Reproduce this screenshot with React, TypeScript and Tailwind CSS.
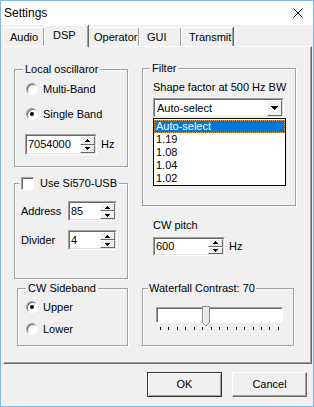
import type { ReactNode } from 'react';

const Radio = ({ checked }: { checked?: boolean }) => (
  <span className="flex h-[12px] w-[12px] shrink-0 items-center justify-center rounded-full border border-t-[#a0a0a0] border-l-[#a0a0a0] border-r-white border-b-white bg-white shadow-[inset_1px_1px_0_#696969]">
    {checked && <span className="h-[4px] w-[4px] rounded-full bg-black" />}
  </span>
);

const Arrow = ({ down }: { down?: boolean }) => (
  <svg width="5" height="3" viewBox="0 0 5 3" shapeRendering="crispEdges">
    {down ? (
      <>
        <rect x="0" y="0" width="5" height="1" />
        <rect x="1" y="1" width="3" height="1" />
        <rect x="2" y="2" width="1" height="1" />
      </>
    ) : (
      <>
        <rect x="2" y="0" width="1" height="1" />
        <rect x="1" y="1" width="3" height="1" />
        <rect x="0" y="2" width="5" height="1" />
      </>
    )}
  </svg>
);

const SpinBtn = ({ down }: { down?: boolean }) => (
  <div className="flex flex-1 items-center justify-center border border-t-white border-l-white border-r-[#696969] border-b-[#696969] bg-[#f0f0f0]">
    <Arrow down={down} />
  </div>
);

interface SpinBoxProps {
  value: string;
  className: string;
}

const SpinBox = ({ value, className }: SpinBoxProps) => (
  <div className={`flex border border-t-[#a0a0a0] border-l-[#a0a0a0] border-r-white border-b-white ${className}`}>
    <div className="flex flex-1 border border-t-[#696969] border-l-[#696969] border-r-[#e3e3e3] border-b-[#e3e3e3] bg-white">
      <span className="flex flex-1 items-center pl-[1px]">{value}</span>
      <div className="flex w-[15px] flex-col">
        <SpinBtn />
        <SpinBtn down />
      </div>
    </div>
  </div>
);

interface GroupProps {
  legend: ReactNode;
  className: string;
  legendClass: string;
  children: ReactNode;
}

const Group = ({ legend, className, legendClass, children }: GroupProps) => (
  <fieldset className={`border border-[#a0a0a0] shadow-[inset_1px_1px_0_#fff,1px_1px_0_#fff] ${className}`}>
    <legend className={`bg-[#f0f0f0] leading-[13px] ${legendClass}`}>{legend}</legend>
    {children}
  </fieldset>
);

const tabs = [
  { label: 'Audio', w: 'w-[41px] pl-[6px]' },
  { label: 'DSP', w: 'w-[44px] pl-[8px]', active: true },
  { label: 'Operator', w: 'w-[51px] pl-[5px]' },
  { label: 'GUI', w: 'w-[42px] pl-[7px]' },
  { label: 'Transmit', w: 'w-[52px] pl-[7px]' },
];

const filterItems = ['Auto-select', '1.19', '1.08', '1.04', '1.02'];

export default function App() {
  return (
    <div className="flex h-[407px] w-[314px] flex-col border border-[#83b8ea] bg-[#f0f0f0] font-['Liberation_Sans',Arial,sans-serif] text-[11px] leading-[13px] text-black">
      {/* title bar */}
      <div className="flex h-[24px] shrink-0 items-center justify-between bg-white pl-[3px] pr-[10px] text-[12px]">
        <span>Settings</span>
        <svg width="10" height="10" viewBox="0 0 10 10">
          <path d="M0.5 0.5 L9.5 9.5 M9.5 0.5 L0.5 9.5" stroke="#000" strokeWidth="1" />
        </svg>
      </div>

      {/* tabs */}
      <div className="ml-[2px] flex h-[21px] shrink-0 items-end">
        {tabs.map((t) =>
          t.active ? (
            <div
              key={t.label}
              className={`relative z-10 -mb-[1px] flex h-[22px] items-center border-l border-t border-white bg-[#f0f0f0] pb-[2px] shadow-[inset_-1px_0_0_#a0a0a0,1px_0_0_#696969] ${t.w}`}
            >
              {t.label}
            </div>
          ) : (
            <div
              key={t.label}
              className={`flex h-[19px] items-center border-l border-t border-white bg-[#f0f0f0] shadow-[inset_-1px_0_0_#a0a0a0,1px_0_0_#696969] ${t.w}`}
            >
              {t.label}
            </div>
          )
        )}
      </div>

      {/* tab page */}
      <div className="ml-[2px] h-[318px] w-[309px] shrink-0 border border-t-white border-l-white border-r-[#696969] border-b-[#696969] pl-[10px] pt-[15px] shadow-[inset_-1px_-1px_0_#a0a0a0]">
        <div className="flex gap-[14px]">
          {/* left column */}
          <div className="mt-[1px] flex w-[114px] flex-col">
            <Group legend="Local oscillaror" className="h-[104px] w-[114px]" legendClass="ml-[8px] px-[2px]">
              <div className="ml-[11px] mt-[5px] flex h-[16px] items-center gap-[5px]">
                <Radio />
                <span>Multi-Band</span>
              </div>
              <div className="ml-[11px] mt-[9px] flex h-[16px] items-center gap-[5px]">
                <Radio checked />
                <span>Single Band</span>
              </div>
              <div className="ml-[10px] mt-[12px] flex items-center gap-[4px]">
                <SpinBox value="7054000" className="h-[21px] w-[72px]" />
                <span>Hz</span>
              </div>
            </Group>

            <Group
              legend={
                <span className="flex items-center gap-[6px]">
                  <span className="h-[13px] w-[13px] border border-t-[#a0a0a0] border-l-[#a0a0a0] border-r-white border-b-white bg-white shadow-[inset_1px_1px_0_#696969]" />
                  <span>Use Si570-USB</span>
                </span>
              }
              className="mt-[10px] h-[102px] w-[114px]"
              legendClass="ml-[4px] px-[2px]"
            >
              <div className="ml-[6px] mt-[11px] flex h-[20px] items-center">
                <span className="w-[47px]">Address</span>
                <SpinBox value="85" className="h-[20px] w-[49px]" />
              </div>
              <div className="ml-[6px] mt-[9px] flex h-[20px] items-center">
                <span className="w-[47px]">Divider</span>
                <SpinBox value="4" className="h-[20px] w-[49px]" />
              </div>
            </Group>

            <Group legend="CW Sideband" className="ml-[3px] mt-[3px] h-[64px] w-[111px]" legendClass="ml-[8px] px-[2px]">
              <div className="ml-[8px] mt-[4px] flex h-[16px] items-center gap-[5px]">
                <Radio checked />
                <span>Upper</span>
              </div>
              <div className="ml-[8px] mt-[6px] flex h-[16px] items-center gap-[5px]">
                <Radio />
                <span>Lower</span>
              </div>
            </Group>
          </div>

          {/* right column */}
          <div className="flex w-[154px] flex-col">
            <Group legend="Filter" className="h-[144px] w-[154px]" legendClass="ml-[7px] px-[2px]">
              <div className="ml-[10px] mt-[6px]">Shape factor at 500 Hz BW</div>
              <div className="relative ml-[10px] mt-[4px] flex h-[20px] w-[131px] border border-t-[#a0a0a0] border-l-[#a0a0a0] border-r-white border-b-white">
                <div className="flex flex-1 border border-t-[#696969] border-l-[#696969] border-r-[#e3e3e3] border-b-[#e3e3e3] bg-white">
                  <span className="flex flex-1 items-center pl-[2px]">Auto-select</span>
                  <div className="flex w-[15px] items-center justify-center border border-t-white border-l-white border-r-[#696969] border-b-[#696969] bg-[#f0f0f0]">
                    <svg width="7" height="4" viewBox="0 0 7 4" shapeRendering="crispEdges">
                      <rect x="0" y="0" width="7" height="1" />
                      <rect x="1" y="1" width="5" height="1" />
                      <rect x="2" y="2" width="3" height="1" />
                      <rect x="3" y="3" width="1" height="1" />
                    </svg>
                  </div>
                </div>
                {/* open dropdown list */}
                <div className="absolute left-[-1px] top-[19px] z-20 w-[133px] border border-black bg-white pt-[1px]">
                  {filterItems.map((item, i) => (
                    <div
                      key={item}
                      className={
                        i === 0
                          ? 'flex h-[13px] items-center border border-dotted border-[#e8a040] bg-[#0078d7] pl-[1px] text-white'
                          : 'flex h-[13px] items-center pl-[2px]'
                      }
                    >
                      {item}
                    </div>
                  ))}
                </div>
              </div>
            </Group>

            <div className="ml-[11px] mt-[13px]">CW pitch</div>
            <div className="ml-[11px] mt-[5px] flex items-center gap-[4px]">
              <SpinBox value="600" className="h-[19px] w-[72px]" />
              <span>Hz</span>
            </div>

            <Group legend="Waterfall Contrast: 70" className="mt-[26px] h-[64px] w-[152px]" legendClass="ml-[5px] px-[1px]">
              <div className="relative ml-[13px] mt-[12px] h-[16px] w-[127px] border border-t-[#a0a0a0] border-l-[#a0a0a0] border-r-white border-b-white bg-white shadow-[inset_1px_1px_0_#696969]">
                <svg className="absolute left-[45px] top-[-2px]" width="8" height="21" viewBox="0 0 8 21">
                  <path d="M0.5 0.5 H7.5 V16.5 L4 20 L0.5 16.5 Z" fill="#e8e8e8" stroke="#8a8a8a" strokeWidth="1" />
                  <path d="M1.5 1.5 V16" stroke="#fff" strokeWidth="1" />
                </svg>
              </div>
              <div className="ml-[17px] mt-[4px] flex h-[3px] w-[119px] justify-between">
                {Array.from({ length: 15 }).map((_, i) => (
                  <span key={i} className="h-[3px] w-[1px] bg-black" />
                ))}
              </div>
            </Group>
          </div>
        </div>
      </div>

      {/* dialog buttons */}
      <div className="mt-[8px] flex justify-end gap-[10px] pr-[6px]">
        <button className="flex h-[25px] w-[75px] items-center justify-center border border-[#333] bg-[#f0f0f0] shadow-[inset_1px_1px_0_#fff,inset_-1px_-1px_0_#a0a0a0]">
          OK
        </button>
        <button className="flex h-[25px] w-[75px] items-center justify-center border border-t-white border-l-white border-r-[#696969] border-b-[#696969] bg-[#f0f0f0] shadow-[inset_-1px_-1px_0_#a0a0a0]">
          Cancel
        </button>
      </div>
    </div>
  );
}
